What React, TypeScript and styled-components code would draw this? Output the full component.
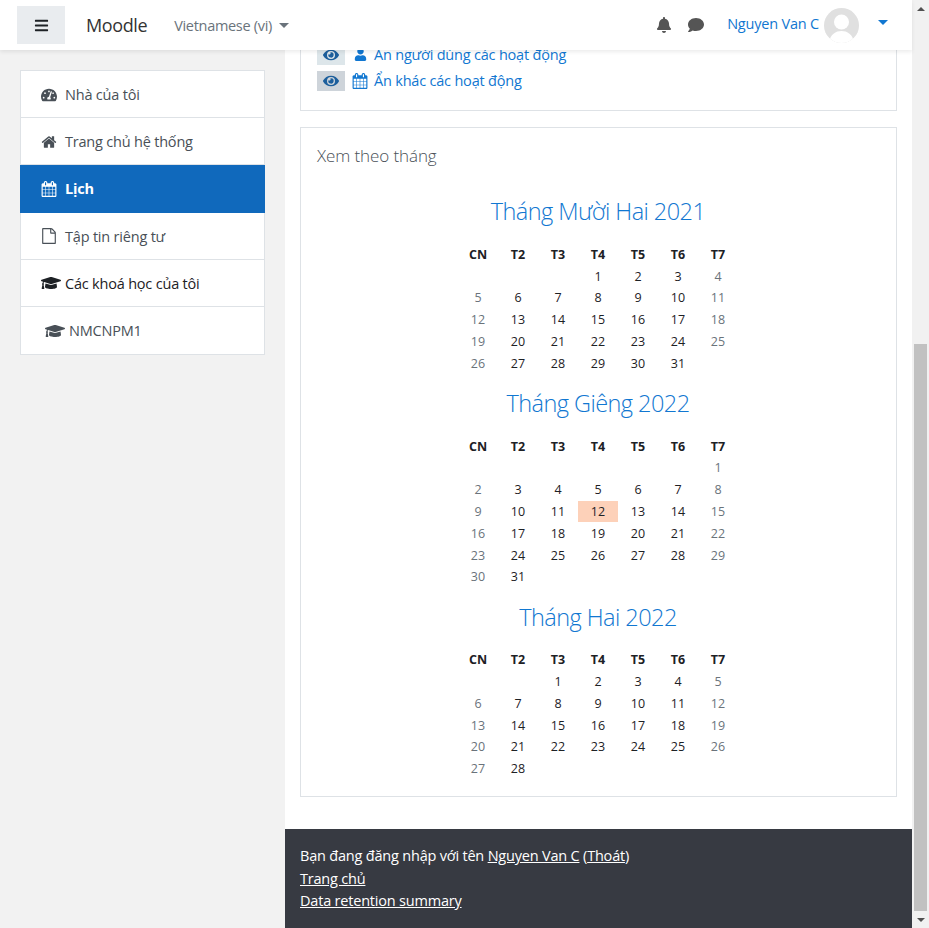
import styled, { createGlobalStyle } from "styled-components"
import { FaBars, FaBell, FaComment, FaEye, FaGraduationCap, FaTachometerAlt, FaUser } from "react-icons/fa"

const HOME_PATH = "M1472 992v480q0 26-19 45t-45 19h-384v-384h-256v384h-384q-26 0-45-19t-19-45v-480q0-1 .5-3t.5-3l575-474 575 474q1 2 1 6zm223-69l-62 74q-8 9-21 11h-3q-13 0-21-7l-692-577-692 577q-12 8-24 7-13-2-21-11l-62-74q-8-10-7-23.500t11-21.500l719-599q32-26 76-26t76 26l244 204v-195q0-14 9-23t23-9h192q14 0 23 9t9 23v408l219 182q10 8 11 21.500t-7 23.500z"
const CALENDAR_PATH = "M192 1664h288v-288h-288v288zm352 0h320v-288h-320v288zm-352-352h288v-320h-288v320zm352 0h320v-320h-320v320zm-352-384h288v-288h-288v288zm736 736h320v-288h-320v288zm-384-736h320v-288h-320v288zm768 736h288v-288h-288v288zm-384-352h320v-320h-320v320zm-352-864v-288q0-13-9.500-22.500t-22.500-9.500h-64q-13 0-22.500 9.500t-9.500 22.500v288q0 13 9.500 22.500t22.500 9.500h64q13 0 22.500-9.500t9.500-22.500zm736 864h288v-320h-288v320zm-384-384h320v-288h-320v288zm384 0h288v-288h-288v288zm32-480v-288q0-13-9.500-22.500t-22.500-9.500h-64q-13 0-22.500 9.500t-9.500 22.500v288q0 13 9.500 22.500t22.500 9.500h64q13 0 22.500-9.500t9.500-22.500zm384-64v1280q0 52-38 90t-90 38h-1408q-52 0-90-38t-38-90v-1280q0-52 38-90t90-38h128v-96q0-66 47-113t113-47h64q66 0 113 47t47 113v96h384v-96q0-66 47-113t113-47h64q66 0 113 47t47 113v96h128q52 0 90 38t38 90z"
const FILE_PATH = "M1596 380q28 28 48 76t20 88v1152q0 40-28 68t-68 28h-1344q-40 0-68-28t-28-68v-1600q0-40 28-68t68-28h896q40 0 88 20t76 48zm-444-244v376h376q-10-29-22-41l-313-313q-12-12-41-22zm384 1528v-1024h-416q-40 0-68-28t-28-68v-416h-768v1536h1280z"

const GlobalStyle = createGlobalStyle`
  html, body {
    margin: 0;
    height: 928px;
    overflow: hidden;
    background: #fff;
  }
  body {
    font-family: "Open Sans", "Noto Sans", sans-serif;
    font-size: 14.5px;
    letter-spacing: -0.2px;
    color: #1d2125;
  }
`

const Shell = styled.div`
  display: flex;
  height: 928px;
`

const Page = styled.div`
  position: relative;
  flex: 1;
  display: flex;
  min-width: 0;
`

const Navbar = styled.header`
  position: absolute;
  top: 0;
  left: 0;
  right: 0;
  z-index: 5;
  height: 50px;
  display: flex;
  align-items: center;
  padding: 0 24px 0 17px;
  background: #fff;
  box-shadow: 0 2px 4px rgba(0, 0, 0, 0.08);
`

const MenuButton = styled.div`
  width: 48px;
  height: 38px;
  display: flex;
  align-items: center;
  justify-content: center;
  background: #e9ecef;
  color: #1d2125;
  font-size: 15px;
`

const Brand = styled.div`
  margin-left: 21px;
  font-size: 18px;
  letter-spacing: -0.4px;
  color: #333;
`

const Language = styled.div`
  margin-left: 27px;
  display: flex;
  align-items: center;
  letter-spacing: -0.3px;
  color: #6a737b;
`

const Caret = styled.span<{ $color: string }>`
  margin-left: 7px;
  width: 0;
  height: 0;
  border-left: 5px solid transparent;
  border-right: 5px solid transparent;
  border-top: 5px solid ${(p) => p.$color};
`

const NavRight = styled.div`
  margin-left: auto;
  display: flex;
  align-items: center;
  color: #555;
`

const NavIcon = styled.span<{ $gap: number }>`
  display: flex;
  margin-right: ${(p) => p.$gap}px;
  font-size: 16px;
`

const UserName = styled.a`
  color: #1177d1;
  margin-top: -3px;
`

const Avatar = styled.svg`
  width: 35px;
  height: 35px;
  margin: 0 19px 0 5px;
  border-radius: 50%;
  flex: none;
`

const UserCaret = styled(Caret)`
  margin: -5px 0 0 0;
`

const Sidebar = styled.aside`
  width: 285px;
  flex: none;
  box-sizing: border-box;
  padding: 70px 20px 0;
  background: #f2f2f2;
`

const NavList = styled.nav`
  border: 1px solid #dee2e6;
  border-bottom: 0;
  background: #fff;
`

const NavItem = styled.a<{ $active?: boolean; $dark?: boolean; $indent?: boolean }>`
  box-sizing: border-box;
  height: 47.2px;
  display: flex;
  align-items: center;
  padding-top: 1px;
  border-bottom: 1px solid ${(p) => (p.$active ? "#1069bc" : "#dee2e6")};
  margin: ${(p) => (p.$active ? "0 -1px" : "0")};
  padding-left: ${(p) => (p.$active ? 21 : p.$indent ? 24 : 20)}px;
  background: ${(p) => (p.$active ? "#1069bc" : "#fff")};
  color: ${(p) => (p.$active ? "#fff" : p.$dark ? "#1d2125" : "#495057")};
  font-weight: ${(p) => (p.$active ? 700 : 400)};

  &:last-child {
    height: 48px;
  }
`

const NavGlyph = styled.span<{ $size?: number }>`
  width: 24px;
  flex: none;
  display: flex;
  align-items: center;
  font-size: ${(p) => p.$size ?? 16}px;
`

const Glyph = styled.svg`
  width: 16px;
  height: 16px;
  fill: currentColor;
`

const Main = styled.main`
  flex: 1;
  min-width: 0;
  display: flex;
  flex-direction: column;
  justify-content: flex-end;
  overflow: hidden;
`

const Region = styled.div`
  padding: 0 15px 32px;
  display: flex;
  flex-direction: column;
  gap: 16px;
`

const Card = styled.section`
  border: 1px solid #dee2e6;
  background: #fff;
`

const FilterCard = styled(Card)`
  padding: 16px 16px 18px;
  display: flex;
  flex-direction: column;
  gap: 3px;
`

const FilterRow = styled.a`
  height: 23px;
  display: flex;
  align-items: center;
  color: #1177d1;
`

const EyeBox = styled.span<{ $light?: boolean }>`
  width: 28px;
  height: 20px;
  display: flex;
  align-items: center;
  justify-content: center;
  background: ${(p) => (p.$light ? "#dde6ea" : "#ced4da")};
  color: #1d5f9c;
  font-size: 16px;
  margin-right: 7px;
`

const FilterGlyph = styled.span`
  width: 16px;
  flex: none;
  display: flex;
  align-items: center;
  justify-content: center;
  margin-right: 6px;
  font-size: 13px;
`

const MonthCard = styled(Card)`
  padding: 16px 17px 16px 16px;
`

const CardTitle = styled.h5`
  margin: 0 0 14px;
  font-size: 17px;
  font-weight: 300;
  line-height: 24px;
  letter-spacing: -0.1px;
  color: #495057;
`

const Month = styled.div`
  display: flex;
  flex-direction: column;
  align-items: center;
`

const MonthTitle = styled.h3`
  margin: 11px 0 14px;
  font-size: 23.5px;
  line-height: 36px;
  font-weight: 300;
  letter-spacing: -0.55px;
  color: #1177d1;
`

const DayGrid = styled.div`
  display: grid;
  grid-template-columns: repeat(7, 40px);
  grid-auto-rows: 21.8px;
  font-size: 12.5px;
  letter-spacing: 0;
`

const DayHead = styled.div`
  display: flex;
  align-items: center;
  justify-content: center;
  font-weight: 700;
  color: #1d2125;
`

const Day = styled.div<{ $weekend: boolean; $today: boolean }>`
  display: flex;
  align-items: center;
  justify-content: center;
  color: ${(p) => (p.$weekend ? "#6a737b" : "#1d2125")};
  background: ${(p) => (p.$today ? "#fdd1b9" : "transparent")};
`

const Footer = styled.footer`
  padding: 16.5px 15px 15.5px;
  background: #373a42;
  color: #fff;
  line-height: 22.5px;

  a {
    color: #fff;
    text-decoration: underline;
  }
`

const Scrollbar = styled.div`
  width: 17px;
  flex: none;
  display: flex;
  flex-direction: column;
  align-items: center;
  background: #f1f1f1;
`

const ArrowButton = styled.div`
  height: 17px;
  flex: none;
  display: flex;
  align-items: center;
  justify-content: center;
`

const ArrowUp = styled.span`
  border-left: 4px solid transparent;
  border-right: 4px solid transparent;
  border-bottom: 4px solid #505050;
`

const ArrowDown = styled.span`
  border-left: 4px solid transparent;
  border-right: 4px solid transparent;
  border-top: 4px solid #505050;
`

const ScrollTrack = styled.div`
  flex: 1;
  display: flex;
  align-items: flex-end;
`

const ScrollThumb = styled.div`
  width: 13px;
  height: 567px;
  background: #c1c1c1;
`

const DAY_NAMES = ["CN", "T2", "T3", "T4", "T5", "T6", "T7"]

const MONTHS = [
  { title: "Tháng Mười Hai 2021", start: 3, days: 31 },
  { title: "Tháng Giêng 2022", start: 6, days: 31, today: 12 },
  { title: "Tháng Hai 2022", start: 2, days: 28 },
]

const Fa4 = ({ d }: { d: string }) => (
  <Glyph viewBox="0 0 1792 1792">
    <path d={d} />
  </Glyph>
)

const MonthView = ({ title, start, days, today }: { title: string; start: number; days: number; today?: number }) => (
  <Month>
    <MonthTitle>{title}</MonthTitle>
    <DayGrid>
      {DAY_NAMES.map((name) => (
        <DayHead key={name}>{name}</DayHead>
      ))}
      {Array.from({ length: start }, (_, i) => (
        <div key={i} />
      ))}
      {Array.from({ length: days }, (_, i) => {
        const col = (start + i) % 7
        return (
          <Day key={i} $weekend={col === 0 || col === 6} $today={today === i + 1}>
            {i + 1}
          </Day>
        )
      })}
    </DayGrid>
  </Month>
)

const App = () => {
  return (
    <Shell>
      <GlobalStyle />
      <Page>
        <Navbar>
          <MenuButton>
            <FaBars />
          </MenuButton>
          <Brand>Moodle</Brand>
          <Language>
            Vietnamese ‎(vi)‎
            <Caret $color="#6a737b" />
          </Language>
          <NavRight>
            <NavIcon $gap={16}>
              <FaBell />
            </NavIcon>
            <NavIcon $gap={23}>
              <FaComment />
            </NavIcon>
            <UserName>Nguyen Van C</UserName>
            <Avatar viewBox="0 0 35 35">
              <rect width="35" height="35" fill="#e0e0e0" />
              <circle cx="17.5" cy="14" r="7.5" fill="#fff" />
              <path d="M5 35c1-9 7-12 12.500-12S29 26 30 35z" fill="#fff" />
            </Avatar>
            <UserCaret $color="#1177d1" />
          </NavRight>
        </Navbar>

        <Sidebar>
          <NavList>
            <NavItem>
              <NavGlyph><FaTachometerAlt /></NavGlyph>
              Nhà của tôi
            </NavItem>
            <NavItem>
              <NavGlyph><Fa4 d={HOME_PATH} /></NavGlyph>
              Trang chủ hệ thống
            </NavItem>
            <NavItem $active>
              <NavGlyph><Fa4 d={CALENDAR_PATH} /></NavGlyph>
              Lịch
            </NavItem>
            <NavItem>
              <NavGlyph><Fa4 d={FILE_PATH} /></NavGlyph>
              Tập tin riêng tư
            </NavItem>
            <NavItem $dark>
              <NavGlyph $size={20}><FaGraduationCap /></NavGlyph>
              Các khoá học của tôi
            </NavItem>
            <NavItem $indent>
              <NavGlyph $size={20}><FaGraduationCap /></NavGlyph>
              NMCNPM1
            </NavItem>
          </NavList>
        </Sidebar>

        <Main>
          <Region>
            <FilterCard>
              <FilterRow>
                <EyeBox $light><FaEye /></EyeBox>
                <FilterGlyph><FaUser /></FilterGlyph>
                Ẩn người dùng các hoạt động
              </FilterRow>
              <FilterRow>
                <EyeBox><FaEye /></EyeBox>
                <FilterGlyph><Fa4 d={CALENDAR_PATH} /></FilterGlyph>
                Ẩn khác các hoạt động
              </FilterRow>
            </FilterCard>
            <MonthCard>
              <CardTitle>Xem theo tháng</CardTitle>
              {MONTHS.map((month) => (
                <MonthView key={month.title} {...month} />
              ))}
            </MonthCard>
          </Region>
          <Footer>
            <div>
              Bạn đang đăng nhập với tên <a>Nguyen Van C</a> (<a>Thoát</a>)
            </div>
            <div><a>Trang chủ</a></div>
            <div><a>Data retention summary</a></div>
          </Footer>
        </Main>
      </Page>
      <Scrollbar>
        <ArrowButton><ArrowUp /></ArrowButton>
        <ScrollTrack><ScrollThumb /></ScrollTrack>
        <ArrowButton><ArrowDown /></ArrowButton>
      </Scrollbar>
    </Shell>
  )
}

export default App
